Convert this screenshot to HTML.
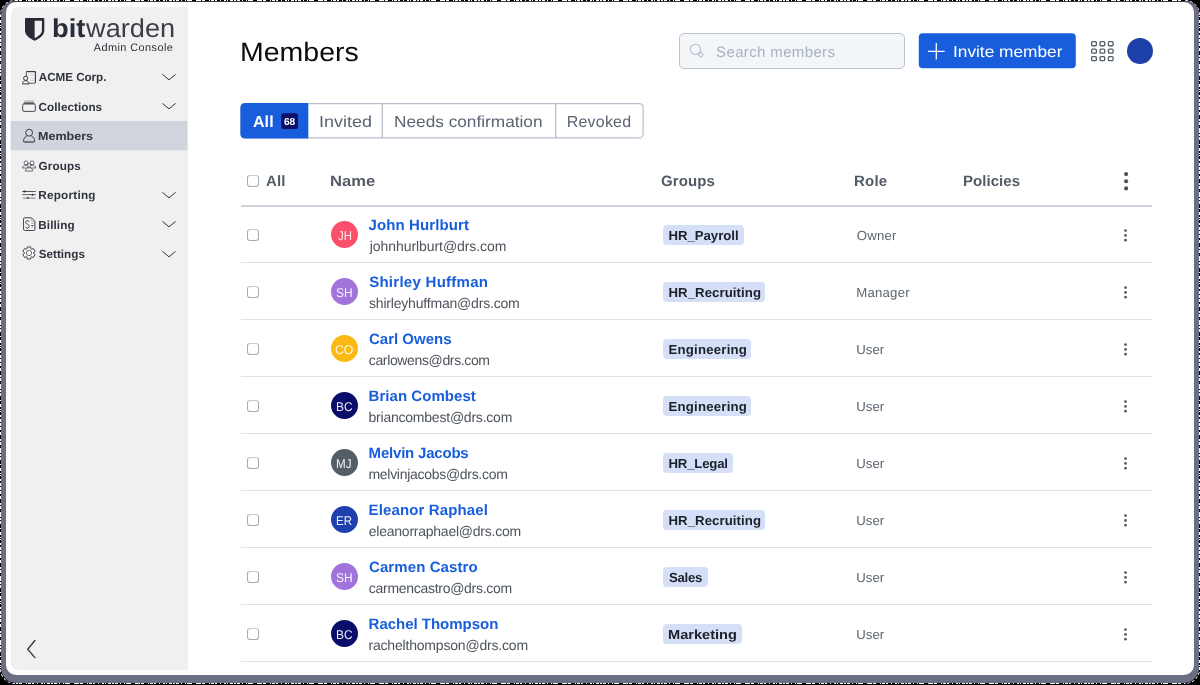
<!DOCTYPE html>
<html>
<head>
<meta charset="utf-8">
<title>Members</title>
<style>
*{box-sizing:border-box;margin:0;padding:0}
html,body{width:1200px;height:685px;overflow:hidden;background:#000;font-family:"Liberation Sans",sans-serif;text-rendering:geometricPrecision;}
#shadow{position:absolute;left:1px;top:1px;width:1198px;height:682px;background:#6c6f83;border-radius:14px 13px 15px 15px;}
.nz{position:absolute;}
#ring{left:0;top:0;width:1200px;height:684px;border:1.5px dashed #fff;border-radius:15px;}
#nt{left:16px;top:0;width:1168px;height:1px;background:repeating-linear-gradient(90deg,#fff 0px 2px,#000 2px 3px,#fff 3px 6px,#000 6px 10px,#fff 10px 11px,#000 11px 12px,#fff 12px 15px,#000 15px 16px,#fff 16px 18px,#000 18px 21px,#fff 21px 22px,#000 22px 25px,#fff 25px 27px,#000 27px 28px,#fff 28px 29px,#000 29px 31px,#fff 31px 34px,#000 34px 35px,#fff 35px 37px,#000 37px 38px,#fff 38px 41px,#000 41px 43px,#fff 43px 44px,#000 44px 47px,#fff 47px 48px,#000 48px 49px,#fff 49px 54px,#000 54px 58px,#fff 58px 61px)}
#nb{left:16px;top:683px;width:1168px;height:1px;background:repeating-linear-gradient(90deg,#fff 0px 2px,#000 2px 3px,#fff 3px 6px,#000 6px 10px,#fff 10px 11px,#000 11px 12px,#fff 12px 15px,#000 15px 16px,#fff 16px 18px,#000 18px 21px,#fff 21px 22px,#000 22px 25px,#fff 25px 27px,#000 27px 28px,#fff 28px 29px,#000 29px 31px,#fff 31px 34px,#000 34px 35px,#fff 35px 37px,#000 37px 38px,#fff 38px 41px,#000 41px 43px,#fff 43px 44px,#000 44px 47px,#fff 47px 48px,#000 48px 49px,#fff 49px 54px,#000 54px 58px,#fff 58px 61px)}
#nl{left:0;top:16px;width:1px;height:652px;background:repeating-linear-gradient(180deg,#fff 0px 1px,#000 1px 4px,#fff 4px 7px,#000 7px 9px,#fff 9px 10px,#000 10px 11px,#fff 11px 12px,#000 12px 15px,#fff 15px 17px,#000 17px 19px,#fff 19px 22px,#000 22px 23px,#fff 23px 26px,#000 26px 27px,#fff 27px 30px,#000 30px 32px,#fff 32px 35px,#000 35px 39px,#fff 39px 41px,#000 41px 42px,#fff 42px 45px,#000 45px 48px,#fff 48px 53px,#000 53px 54px,#fff 54px 56px,#000 56px 57px,#fff 57px 60px,#000 60px 64px)}
#nr{left:1199px;top:16px;width:1px;height:652px;background:repeating-linear-gradient(180deg,#fff 0px 1px,#000 1px 4px,#fff 4px 7px,#000 7px 9px,#fff 9px 10px,#000 10px 11px,#fff 11px 12px,#000 12px 15px,#fff 15px 17px,#000 17px 19px,#fff 19px 22px,#000 22px 23px,#fff 23px 26px,#000 26px 27px,#fff 27px 30px,#000 30px 32px,#fff 32px 35px,#000 35px 39px,#fff 39px 41px,#000 41px 42px,#fff 42px 45px,#000 45px 48px,#fff 48px 53px,#000 53px 54px,#fff 54px 56px,#000 56px 57px,#fff 57px 60px,#000 60px 64px)}
#card{position:absolute;left:6px;top:2px;width:1188px;height:673px;background:#fff;border-radius:10px;}
#side{position:absolute;left:10.5px;top:7px;width:177px;height:663px;background:#f0f0f0;border-radius:7px 0 0 7px;}
.t{position:absolute;white-space:nowrap;line-height:1;}
.b{position:absolute;}
.cb{width:12px;height:12px;border:1px solid #a3abb6;border-top-color:#c4cad2;border-radius:3px;background:#fff}
#root{position:absolute;left:0;top:0;width:1200px;height:685px;will-change:transform;}
svg{position:absolute;overflow:visible}
</style>
</head>
<body>
<div id="root">
<div class="nz" id="ring"></div><div class="nz" id="nt"></div><div class="nz" id="nb"></div><div class="nz" id="nl"></div><div class="nz" id="nr"></div>
<div id="shadow"></div>
<div class="b" style="left:14px;top:1px;width:1172px;height:1px;background:#3c3d46"></div>
<div id="card"></div>
<div id="side"></div>
<svg style="left:0;top:100px" width="200" height="60" viewBox="0 0 200 60"><rect x="10.5" y="21.1" width="177" height="29.2" fill="#d0d5dd"/></svg>

<svg style="left:25px;top:18px" width="19.3" height="22.8" viewBox="0 0 19.3 22.8"><path d="M1 0H18.3Q19.3 0 19.3 1V12.5C19.3 17.5 14 20.8 9.65 22.8C5.3 20.8 0 17.5 0 12.5V1Q0 0 1 0Z" fill="#282b35"/><path d="M9.65 2.8H16.9V12.5C16.9 15.8 13.1 18.4 9.65 20.1Z" fill="#f0f0f0"/></svg>
<div class="t" style="left:51.60px;top:15px;font-size:26.00px;color:#2a2d38;font-weight:bold;transform:scaleX(1.0494);transform-origin:0 0;">bit</div>
<div class="t" style="left:85.74px;top:15px;font-size:26.00px;color:#3b3e48;transform:scaleX(1.0452);transform-origin:0 0;">warden</div>
<div class="t" style="left:93.78px;top:43px;font-size:10.90px;color:#2b2e38;letter-spacing:0.432px;">Admin Console</div>
<div class="t" style="left:38.81px;top:72px;font-size:11.70px;color:#30343e;font-weight:bold;letter-spacing:-0.061px;">ACME Corp.</div>
<svg style="left:162px;top:73.80px" width="14" height="7" viewBox="0 0 14 7"><path d="M0.4 0.4L7 5.8L13.6 0.4" fill="none" stroke="#30343e" stroke-width="1"/></svg>
<div class="t" style="left:38.62px;top:102px;font-size:11.70px;color:#30343e;font-weight:bold;letter-spacing:0.050px;">Collections</div>
<svg style="left:162px;top:103.25px" width="14" height="7" viewBox="0 0 14 7"><path d="M0.4 0.4L7 5.8L13.6 0.4" fill="none" stroke="#30343e" stroke-width="1"/></svg>
<div class="t" style="left:38.26px;top:131px;font-size:11.70px;color:#30343e;font-weight:bold;transform:scaleX(1.0737);transform-origin:0 0;">Members</div>
<div class="t" style="left:38.62px;top:161px;font-size:11.70px;color:#30343e;font-weight:bold;letter-spacing:0.112px;">Groups</div>
<div class="t" style="left:38.32px;top:190px;font-size:11.70px;color:#30343e;font-weight:bold;letter-spacing:0.240px;">Reporting</div>
<svg style="left:162px;top:191.60px" width="14" height="7" viewBox="0 0 14 7"><path d="M0.4 0.4L7 5.8L13.6 0.4" fill="none" stroke="#30343e" stroke-width="1"/></svg>
<div class="t" style="left:38.32px;top:220px;font-size:11.70px;color:#30343e;font-weight:bold;letter-spacing:0.087px;">Billing</div>
<svg style="left:162px;top:221.05px" width="14" height="7" viewBox="0 0 14 7"><path d="M0.4 0.4L7 5.8L13.6 0.4" fill="none" stroke="#30343e" stroke-width="1"/></svg>
<div class="t" style="left:38.76px;top:249px;font-size:11.70px;color:#30343e;font-weight:bold;letter-spacing:0.009px;">Settings</div>
<svg style="left:162px;top:250.50px" width="14" height="7" viewBox="0 0 14 7"><path d="M0.4 0.4L7 5.8L13.6 0.4" fill="none" stroke="#30343e" stroke-width="1"/></svg>
<svg style="left:22.00px;top:71.00px" width="14" height="13" viewBox="0 0 14 13"><rect x="4.4" y="0.6" width="9" height="11.6" rx="0.6" fill="#f9f9f9" stroke="#555a62" stroke-width="1"/><path d="M4.4 0.6H13.4V12" fill="none" stroke="#33373f" stroke-width="1"/><path d="M6.2 2.4H7.3M8.3 2.4H12M6.2 4.5H7.3M8.3 4.5H12M8.3 7.4H12M8.3 9.5H12" stroke="#c3c7cd" stroke-width="0.8" fill="none"/><path d="M0.5 12.9C0.5 10.6 1.9 9.7 3.7 9.7C5.5 9.7 6.9 10.6 6.9 12.9Z" fill="#f6f6f6" stroke="#33373f" stroke-width="1" stroke-linejoin="round"/><circle cx="3.7" cy="7.3" r="2.1" fill="#f6f6f6" stroke="#33373f" stroke-width="1"/></svg>
<svg style="left:22.00px;top:100.00px" width="14" height="12" viewBox="0 0 14 12"><rect x="2.3" y="0.2" width="9.5" height="1.8" fill="#c2c4c7"/><path d="M2.4 2.2H11.6L13 3.9H1Z" fill="#5c6068"/><rect x="0.7" y="4" width="12.6" height="7.4" rx="1.4" fill="#f3f3f3" stroke="#464a52" stroke-width="1"/></svg>
<svg style="left:22.00px;top:128.00px" width="14" height="15" viewBox="0 0 14 15"><circle cx="7.1" cy="4.7" r="3.45" fill="none" stroke="#3a3e47" stroke-width="1"/><path d="M4.8 8.2C2.8 9 1.5 10.8 1.5 13.2C1.5 13.9 2 14.1 2.6 14.1H11.6C12.2 14.1 12.7 13.9 12.7 13.2C12.7 10.8 11.4 9 9.4 8.2" fill="none" stroke="#3a3e47" stroke-width="1"/><path d="M2.2 13.6H12" stroke="#70747c" stroke-width="1.1" fill="none"/></svg>
<svg style="left:22.00px;top:159.50px" width="14" height="12" viewBox="0 0 14 12"><circle cx="4" cy="2.8" r="1.9" fill="#fafafa" stroke="#565a62" stroke-width="0.9"/><circle cx="10.1" cy="2.8" r="1.9" fill="#fafafa" stroke="#565a62" stroke-width="0.9"/><path d="M0.5 8C0.5 6.2 1.9 5.2 4 5.2C5 5.2 5.6 5.5 6 6V8Z" fill="#fafafa" stroke="#565a62" stroke-width="0.9" stroke-linejoin="round"/><path d="M13.6 8C13.6 6.2 12.2 5.2 10.1 5.2C9.1 5.2 8.5 5.5 8.1 6V8Z" fill="#fafafa" stroke="#565a62" stroke-width="0.9" stroke-linejoin="round"/><path d="M3.4 11C3.4 9 4.9 7.8 7.05 7.8C9.2 7.8 10.7 9 10.7 11Z" fill="#fafafa" stroke="#565a62" stroke-width="0.9" stroke-linejoin="round"/><circle cx="7.05" cy="5.4" r="1.75" fill="#fafafa" stroke="#565a62" stroke-width="0.9"/></svg>
<svg style="left:22.00px;top:190.00px" width="14" height="10" viewBox="0 0 14 10"><path d="M0.3 1.5H13.7" stroke="#3f434b" stroke-width="0.9"/><ellipse cx="2.6" cy="1.5" rx="1.3" ry="0.9" fill="#2f333b"/><path d="M0.3 4.6H13.7" stroke="#4a4e56" stroke-width="0.9"/><ellipse cx="10.5" cy="4.8" rx="1" ry="1" fill="#2f333b"/><path d="M0.8 8.1H13.7" stroke="#9a9da2" stroke-width="1.3"/><ellipse cx="5.8" cy="8.1" rx="1.1" ry="1" fill="#4a4e56"/></svg>
<svg style="left:22.60px;top:217.00px" width="13" height="14" viewBox="0 0 13 14"><path d="M1.6 0.8H8.4L11.9 4.3V12.4Q11.9 13.4 10.9 13.4H1.6Q0.6 13.4 0.6 12.4V1.8Q0.6 0.8 1.6 0.8Z" fill="#f9f9f9" stroke="#3a3e47" stroke-width="1" stroke-linejoin="round"/><path d="M8.2 1V3.2Q8.2 4.4 9.4 4.4H11.6" fill="none" stroke="#9a9da2" stroke-width="0.9"/><path d="M6.3 5C5.9 4.1 5.2 3.7 4.4 3.7C3.4 3.7 2.7 4.4 2.7 5.3C2.7 7.6 6.3 6.9 6.3 9.3C6.3 10.3 5.5 11.1 4.4 11.1C3.5 11.1 2.8 10.6 2.5 9.8" fill="none" stroke="#3a3e47" stroke-width="1"/><path d="M4.4 3V3.7M4.4 11.1V11.8" stroke="#3a3e47" stroke-width="0.9"/><path d="M8.3 6.4H10.4" stroke="#70747c" stroke-width="0.8"/><path d="M8.3 8.5H10.4" stroke="#2f333b" stroke-width="1"/><path d="M8.3 10.4H10.4" stroke="#9a9da2" stroke-width="0.8"/></svg>
<svg style="left:21.90px;top:246.40px" width="14" height="14" viewBox="0 0 14 14"><path d="M5.21 0.96L8.79 0.96L8.87 2.80L9.70 3.28L11.34 2.43L13.13 5.53L11.57 6.52L11.57 7.48L13.13 8.47L11.34 11.57L9.70 10.72L8.87 11.20L8.79 13.04L5.21 13.04L5.13 11.20L4.30 10.72L2.66 11.57L0.87 8.47L2.43 7.48L2.43 6.52L0.87 5.53L2.66 2.43L4.30 3.28L5.13 2.80Z" fill="#f9f9f9" stroke="#30343c" stroke-width="0.9" stroke-linejoin="round"/><circle cx="7" cy="7" r="2.7" fill="none" stroke="#60646c" stroke-width="0.9"/></svg>
<svg style="left:27px;top:640px" width="9" height="18" viewBox="0 0 9 18"><path d="M7.9 0.5L0.7 9.3L7.9 17.6" fill="none" stroke="#33363f" stroke-width="1.35" stroke-linecap="round"/></svg>
<div class="t" style="left:240.26px;top:39px;font-size:26.60px;color:#0c0c0c;transform:scaleX(1.0714);transform-origin:0 0;">Members</div>
<div class="b" style="left:679px;top:33px;width:225.6px;height:35.6px;background:#f3f6f9;border:1px solid #b8c1ce;border-radius:5px"></div>
<svg style="left:689px;top:43px" width="16" height="16" viewBox="0 0 16 16"><circle cx="6.4" cy="6.3" r="5.15" fill="none" stroke="#b3bcc8" stroke-width="1.05"/><g transform="translate(10.05 9.95) rotate(45)"><rect x="0.4" y="-1.75" width="4" height="3.5" rx="0.6" fill="none" stroke="#b3bcc8" stroke-width="1.05"/></g></svg>
<div class="t" style="left:716.12px;top:45px;font-size:15.00px;color:#a8b1be;letter-spacing:0.355px;">Search members</div>
<svg style="left:900px;top:20px" width="200" height="60" viewBox="0 0 200 60"><rect x="18.8" y="13.3" width="157" height="35" rx="4" fill="#175ddc"/></svg>
<svg style="left:928px;top:42.6px" width="16.6" height="16.6" viewBox="0 0 16.6 16.6"><path d="M8.3 0V16.6M0 8.3H16.6" stroke="#fff" stroke-width="1.3" fill="none"/></svg>
<div class="t" style="left:952.91px;top:45px;font-size:16.00px;color:#fff;transform:scaleX(1.0790);transform-origin:0 0;">Invite member</div>
<svg style="left:1090.5px;top:41.1px" width="23" height="21" viewBox="0 0 23 21"><rect x="0.65" y="0.65" width="4.7" height="4.1" rx="0.9" fill="none" stroke="#525c66" stroke-width="1.3"/><rect x="9.01" y="0.65" width="4.7" height="4.1" rx="0.9" fill="none" stroke="#525c66" stroke-width="1.3"/><rect x="17.37" y="0.65" width="4.7" height="4.1" rx="0.9" fill="none" stroke="#525c66" stroke-width="1.3"/><rect x="0.65" y="8.12" width="4.7" height="4.1" rx="0.9" fill="none" stroke="#525c66" stroke-width="1.3"/><rect x="9.01" y="8.12" width="4.7" height="4.1" rx="0.9" fill="none" stroke="#525c66" stroke-width="1.3"/><rect x="17.37" y="8.12" width="4.7" height="4.1" rx="0.9" fill="none" stroke="#525c66" stroke-width="1.3"/><rect x="0.65" y="15.59" width="4.7" height="4.1" rx="0.9" fill="none" stroke="#525c66" stroke-width="1.3"/><rect x="9.01" y="15.59" width="4.7" height="4.1" rx="0.9" fill="none" stroke="#525c66" stroke-width="1.3"/><rect x="17.37" y="15.59" width="4.7" height="4.1" rx="0.9" fill="none" stroke="#525c66" stroke-width="1.3"/></svg>
<div class="b" style="left:1127px;top:37.8px;width:26px;height:26px;border-radius:50%;background:#1d40ab"></div>
<svg style="left:0;top:0" width="700" height="150" viewBox="0 0 700 150"><rect x="241" y="103.55" width="402.1" height="34.4" rx="4" fill="#fff" stroke="#b7bfca" stroke-width="1.2"/><path d="M382.3 103.6V138M555.7 103.6V138" stroke="#a9b2be" stroke-width="1.1" fill="none"/><path d="M245.4 102.95H308.3V138.5H245.4Q240.4 138.5 240.4 133.5V107.95Q240.4 102.95 245.4 102.95Z" fill="#175ddc"/><rect x="281.3" y="113.2" width="16.6" height="15.8" rx="2.6" fill="#0b1065"/></svg>
<div class="t" style="left:252.90px;top:115px;font-size:16.00px;color:#fff;font-weight:bold;letter-spacing:0.143px;">All</div>
<div class="t" style="left:284.03px;top:118px;font-size:10.20px;color:#fff;font-weight:bold;letter-spacing:-0.158px;">68</div>
<div class="t" style="left:318.54px;top:115px;font-size:16.00px;color:#5a6472;transform:scaleX(1.1225);transform-origin:0 0;">Invited</div>
<div class="t" style="left:393.79px;top:115px;font-size:16.00px;color:#5a6472;transform:scaleX(1.0776);transform-origin:0 0;">Needs confirmation</div>
<div class="t" style="left:566.69px;top:115px;font-size:16.00px;color:#5a6472;letter-spacing:0.216px;">Revoked</div>
<div class="b cb" style="left:247.2px;top:174.8px"></div>
<div class="t" style="left:265.93px;top:174px;font-size:15.00px;color:#525b66;font-weight:bold;letter-spacing:0.184px;">All</div>
<div class="t" style="left:329.89px;top:174px;font-size:15.00px;color:#525b66;font-weight:bold;transform:scaleX(1.1058);transform-origin:0 0;">Name</div>
<div class="t" style="left:660.98px;top:174px;font-size:15.00px;color:#525b66;font-weight:bold;letter-spacing:0.119px;">Groups</div>
<div class="t" style="left:854.10px;top:174px;font-size:15.00px;color:#525b66;font-weight:bold;letter-spacing:0.170px;">Role</div>
<div class="t" style="left:963.00px;top:174px;font-size:15.00px;color:#525b66;font-weight:bold;letter-spacing:0.046px;">Policies</div>
<svg style="left:1123.8px;top:171.8px" width="4.2" height="18.6" viewBox="0 0 4.2 18.6"><circle cx="2.1" cy="2.1" r="2.05" fill="#48515a"/><circle cx="2.1" cy="9.3" r="2.05" fill="#48515a"/><circle cx="2.1" cy="16.4" r="2.05" fill="#48515a"/></svg>
<div class="b" style="left:241px;top:204.7px;width:911px;height:2px;background:#cdd4dc"></div>
<div class="b" style="left:241px;top:262.0px;width:911px;height:1px;background:#dde2e9"></div>
<div class="b cb" style="left:247.2px;top:228.50px"></div>
<div class="b" style="left:330.8px;top:221.00px;width:27px;height:27px;border-radius:50%;background:#fa506b"></div>
<div class="t" style="left:337.72px;top:230px;font-size:12.70px;color:#fff;transform:scaleX(0.8959);transform-origin:0 0;opacity:.92;">JH</div>
<div class="t" style="left:368.57px;top:218px;font-size:15.00px;color:#175ddc;font-weight:bold;letter-spacing:0.105px;">John Hurlburt</div>
<div class="t" style="left:369.74px;top:239px;font-size:14.00px;color:#4d535c;letter-spacing:-0.066px;">johnhurlburt@drs.com</div>
<div class="b" style="left:663.2px;top:224.75px;width:80.6px;height:20px;border-radius:4px;background:#d5e0f8"></div>
<div class="t" style="left:668.52px;top:229px;font-size:13.20px;color:#1b2029;font-weight:bold;letter-spacing:-0.034px;">HR_Payroll</div>
<div class="t" style="left:856.67px;top:229px;font-size:13.20px;color:#5c646e;letter-spacing:0.242px;">Owner</div>
<svg style="left:1123.9px;top:228.50px" width="3" height="13" viewBox="0 0 3 13"><circle cx="1.5" cy="1.6" r="1.4" fill="#555e68"/><circle cx="1.5" cy="6.4" r="1.4" fill="#555e68"/><circle cx="1.5" cy="11.2" r="1.4" fill="#555e68"/></svg>
<div class="b" style="left:241px;top:319.0px;width:911px;height:1px;background:#dde2e9"></div>
<div class="b cb" style="left:247.2px;top:285.50px"></div>
<div class="b" style="left:330.8px;top:278.00px;width:27px;height:27px;border-radius:50%;background:#a174dc"></div>
<div class="t" style="left:336.21px;top:287px;font-size:12.70px;color:#fff;transform:scaleX(0.9420);transform-origin:0 0;opacity:.92;">SH</div>
<div class="t" style="left:369.17px;top:275px;font-size:15.00px;color:#175ddc;font-weight:bold;letter-spacing:0.274px;">Shirley Huffman</div>
<div class="t" style="left:369.01px;top:296px;font-size:14.00px;color:#4d535c;letter-spacing:-0.192px;">shirleyhuffman@drs.com</div>
<div class="b" style="left:663.2px;top:281.75px;width:102.1px;height:20px;border-radius:4px;background:#d5e0f8"></div>
<div class="t" style="left:668.52px;top:286px;font-size:13.20px;color:#1b2029;font-weight:bold;letter-spacing:0.074px;">HR_Recruiting</div>
<div class="t" style="left:856.22px;top:286px;font-size:13.20px;color:#5c646e;letter-spacing:0.217px;">Manager</div>
<svg style="left:1123.9px;top:285.50px" width="3" height="13" viewBox="0 0 3 13"><circle cx="1.5" cy="1.6" r="1.4" fill="#555e68"/><circle cx="1.5" cy="6.4" r="1.4" fill="#555e68"/><circle cx="1.5" cy="11.2" r="1.4" fill="#555e68"/></svg>
<div class="b" style="left:241px;top:376.0px;width:911px;height:1px;background:#dde2e9"></div>
<div class="b cb" style="left:247.2px;top:342.50px"></div>
<div class="b" style="left:330.8px;top:335.00px;width:27px;height:27px;border-radius:50%;background:#fdb913"></div>
<div class="t" style="left:335.08px;top:344px;font-size:12.70px;color:#fff;transform:scaleX(0.9664);transform-origin:0 0;opacity:.92;">CO</div>
<div class="t" style="left:368.98px;top:332px;font-size:15.00px;color:#175ddc;font-weight:bold;letter-spacing:0.011px;">Carl Owens</div>
<div class="t" style="left:368.81px;top:353px;font-size:14.00px;color:#4d535c;letter-spacing:-0.363px;">carlowens@drs.com</div>
<div class="b" style="left:663.2px;top:338.75px;width:88.3px;height:20px;border-radius:4px;background:#d5e0f8"></div>
<div class="t" style="left:668.52px;top:343px;font-size:13.20px;color:#1b2029;font-weight:bold;letter-spacing:0.219px;">Engineering</div>
<div class="t" style="left:856.28px;top:343px;font-size:13.20px;color:#5c646e;letter-spacing:0.023px;">User</div>
<svg style="left:1123.9px;top:342.50px" width="3" height="13" viewBox="0 0 3 13"><circle cx="1.5" cy="1.6" r="1.4" fill="#555e68"/><circle cx="1.5" cy="6.4" r="1.4" fill="#555e68"/><circle cx="1.5" cy="11.2" r="1.4" fill="#555e68"/></svg>
<div class="b" style="left:241px;top:433.0px;width:911px;height:1px;background:#dde2e9"></div>
<div class="b cb" style="left:247.2px;top:399.50px"></div>
<div class="b" style="left:330.8px;top:392.00px;width:27px;height:27px;border-radius:50%;background:#0b0d6b"></div>
<div class="t" style="left:335.77px;top:401px;font-size:12.70px;color:#fff;transform:scaleX(0.9369);transform-origin:0 0;opacity:.92;">BC</div>
<div class="t" style="left:368.60px;top:389px;font-size:15.00px;color:#175ddc;font-weight:bold;letter-spacing:0.042px;">Brian Combest</div>
<div class="t" style="left:368.50px;top:410px;font-size:14.00px;color:#4d535c;letter-spacing:-0.222px;">briancombest@drs.com</div>
<div class="b" style="left:663.2px;top:395.75px;width:88.3px;height:20px;border-radius:4px;background:#d5e0f8"></div>
<div class="t" style="left:668.52px;top:400px;font-size:13.20px;color:#1b2029;font-weight:bold;letter-spacing:0.219px;">Engineering</div>
<div class="t" style="left:856.28px;top:400px;font-size:13.20px;color:#5c646e;letter-spacing:0.023px;">User</div>
<svg style="left:1123.9px;top:399.50px" width="3" height="13" viewBox="0 0 3 13"><circle cx="1.5" cy="1.6" r="1.4" fill="#555e68"/><circle cx="1.5" cy="6.4" r="1.4" fill="#555e68"/><circle cx="1.5" cy="11.2" r="1.4" fill="#555e68"/></svg>
<div class="b" style="left:241px;top:490.0px;width:911px;height:1px;background:#dde2e9"></div>
<div class="b cb" style="left:247.2px;top:456.50px"></div>
<div class="b" style="left:330.8px;top:449.00px;width:27px;height:27px;border-radius:50%;background:#555e67"></div>
<div class="t" style="left:336.49px;top:458px;font-size:12.70px;color:#fff;transform:scaleX(0.9167);transform-origin:0 0;opacity:.92;">MJ</div>
<div class="t" style="left:368.60px;top:446px;font-size:15.00px;color:#175ddc;font-weight:bold;letter-spacing:-0.202px;">Melvin Jacobs</div>
<div class="t" style="left:368.47px;top:467px;font-size:14.00px;color:#4d535c;letter-spacing:-0.293px;">melvinjacobs@drs.com</div>
<div class="b" style="left:663.2px;top:452.75px;width:69.6px;height:20px;border-radius:4px;background:#d5e0f8"></div>
<div class="t" style="left:668.52px;top:457px;font-size:13.20px;color:#1b2029;font-weight:bold;letter-spacing:-0.195px;">HR_Legal</div>
<div class="t" style="left:856.28px;top:457px;font-size:13.20px;color:#5c646e;letter-spacing:0.023px;">User</div>
<svg style="left:1123.9px;top:456.50px" width="3" height="13" viewBox="0 0 3 13"><circle cx="1.5" cy="1.6" r="1.4" fill="#555e68"/><circle cx="1.5" cy="6.4" r="1.4" fill="#555e68"/><circle cx="1.5" cy="11.2" r="1.4" fill="#555e68"/></svg>
<div class="b" style="left:241px;top:547.0px;width:911px;height:1px;background:#dde2e9"></div>
<div class="b cb" style="left:247.2px;top:513.50px"></div>
<div class="b" style="left:330.8px;top:506.00px;width:27px;height:27px;border-radius:50%;background:#1d40ae"></div>
<div class="t" style="left:336.11px;top:515px;font-size:12.70px;color:#fff;transform:scaleX(0.9056);transform-origin:0 0;opacity:.92;">ER</div>
<div class="t" style="left:368.60px;top:503px;font-size:15.00px;color:#175ddc;font-weight:bold;letter-spacing:0.123px;">Eleanor Raphael</div>
<div class="t" style="left:368.81px;top:524px;font-size:14.00px;color:#4d535c;letter-spacing:-0.242px;">eleanorraphael@drs.com</div>
<div class="b" style="left:663.2px;top:509.75px;width:102.1px;height:20px;border-radius:4px;background:#d5e0f8"></div>
<div class="t" style="left:668.52px;top:514px;font-size:13.20px;color:#1b2029;font-weight:bold;letter-spacing:0.074px;">HR_Recruiting</div>
<div class="t" style="left:856.28px;top:514px;font-size:13.20px;color:#5c646e;letter-spacing:0.023px;">User</div>
<svg style="left:1123.9px;top:513.50px" width="3" height="13" viewBox="0 0 3 13"><circle cx="1.5" cy="1.6" r="1.4" fill="#555e68"/><circle cx="1.5" cy="6.4" r="1.4" fill="#555e68"/><circle cx="1.5" cy="11.2" r="1.4" fill="#555e68"/></svg>
<div class="b" style="left:241px;top:604.0px;width:911px;height:1px;background:#dde2e9"></div>
<div class="b cb" style="left:247.2px;top:570.50px"></div>
<div class="b" style="left:330.8px;top:563.00px;width:27px;height:27px;border-radius:50%;background:#a174dc"></div>
<div class="t" style="left:336.21px;top:572px;font-size:12.70px;color:#fff;transform:scaleX(0.9420);transform-origin:0 0;opacity:.92;">SH</div>
<div class="t" style="left:368.98px;top:560px;font-size:15.00px;color:#175ddc;font-weight:bold;letter-spacing:0.097px;">Carmen Castro</div>
<div class="t" style="left:368.81px;top:581px;font-size:14.00px;color:#4d535c;letter-spacing:-0.289px;">carmencastro@drs.com</div>
<div class="b" style="left:663.2px;top:566.75px;width:44.7px;height:20px;border-radius:4px;background:#d5e0f8"></div>
<div class="t" style="left:669.02px;top:571px;font-size:13.20px;color:#1b2029;font-weight:bold;letter-spacing:-0.268px;">Sales</div>
<div class="t" style="left:856.28px;top:571px;font-size:13.20px;color:#5c646e;letter-spacing:0.023px;">User</div>
<svg style="left:1123.9px;top:570.50px" width="3" height="13" viewBox="0 0 3 13"><circle cx="1.5" cy="1.6" r="1.4" fill="#555e68"/><circle cx="1.5" cy="6.4" r="1.4" fill="#555e68"/><circle cx="1.5" cy="11.2" r="1.4" fill="#555e68"/></svg>
<div class="b" style="left:241px;top:661.0px;width:911px;height:1px;background:#dde2e9"></div>
<div class="b cb" style="left:247.2px;top:627.50px"></div>
<div class="b" style="left:330.8px;top:620.00px;width:27px;height:27px;border-radius:50%;background:#0b0d6b"></div>
<div class="t" style="left:335.77px;top:629px;font-size:12.70px;color:#fff;transform:scaleX(0.9369);transform-origin:0 0;opacity:.92;">BC</div>
<div class="t" style="left:368.60px;top:617px;font-size:15.00px;color:#175ddc;font-weight:bold;letter-spacing:-0.020px;">Rachel Thompson</div>
<div class="t" style="left:368.47px;top:638px;font-size:14.00px;color:#4d535c;letter-spacing:-0.189px;">rachelthompson@drs.com</div>
<div class="b" style="left:663.2px;top:623.75px;width:78.6px;height:20px;border-radius:4px;background:#d5e0f8"></div>
<div class="t" style="left:668.42px;top:628px;font-size:13.20px;color:#1b2029;font-weight:bold;transform:scaleX(1.1060);transform-origin:0 0;">Marketing</div>
<div class="t" style="left:856.28px;top:628px;font-size:13.20px;color:#5c646e;letter-spacing:0.023px;">User</div>
<svg style="left:1123.9px;top:627.50px" width="3" height="13" viewBox="0 0 3 13"><circle cx="1.5" cy="1.6" r="1.4" fill="#555e68"/><circle cx="1.5" cy="6.4" r="1.4" fill="#555e68"/><circle cx="1.5" cy="11.2" r="1.4" fill="#555e68"/></svg>
</div>
</body>
</html>
